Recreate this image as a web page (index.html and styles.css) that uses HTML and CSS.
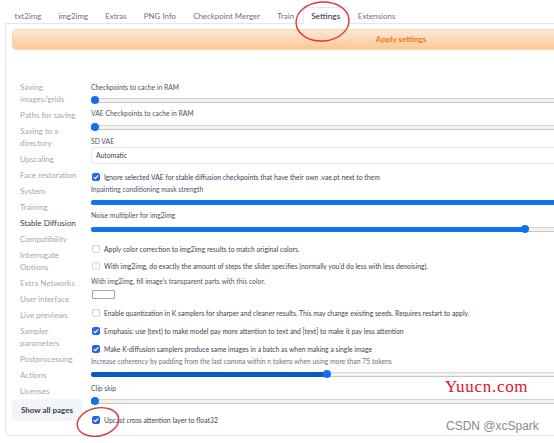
FILE: index.html
```html
<!DOCTYPE html>
<html>
<head>
<meta charset="utf-8">
<title>Settings</title>
<link rel="stylesheet" href="styles.css">
</head>
<body>
<div class="app">
  <div class="tabs">
    <div class="tab">txt2img</div>
    <div class="tab">img2img</div>
    <div class="tab">Extras</div>
    <div class="tab">PNG Info</div>
    <div class="tab">Checkpoint Merger</div>
    <div class="tab">Train</div>
    <div class="tab selected">Settings</div>
    <div class="tab">Extensions</div>
  </div>
  <div class="panel">
    <div class="apply">Apply settings</div>
    <div class="settings">
      <div class="sidebar">
        <div class="nav">Saving images/grids</div>
        <div class="nav">Paths for saving</div>
        <div class="nav">Saving to a directory</div>
        <div class="nav">Upscaling</div>
        <div class="nav">Face restoration</div>
        <div class="nav">System</div>
        <div class="nav">Training</div>
        <div class="nav active">Stable Diffusion</div>
        <div class="nav">Compatibility</div>
        <div class="nav">Interrogate Options</div>
        <div class="nav">Extra Networks</div>
        <div class="nav">User interface</div>
        <div class="nav">Live previews</div>
        <div class="nav">Sampler parameters</div>
        <div class="nav">Postprocessing</div>
        <div class="nav">Actions</div>
        <div class="nav">Licenses</div>
        <div class="show-all">Show all pages</div>
      </div>
      <div class="main">
        <div class="label first">Checkpoints to cache in RAM</div>
        <div class="slider" style="--v:0"><div class="track"><div class="fill"></div><div class="rest"></div></div><div class="thumb"></div></div>

        <div class="label">VAE Checkpoints to cache in RAM</div>
        <div class="slider mt5" style="--v:0"><div class="track"><div class="fill"></div><div class="rest"></div></div><div class="thumb"></div></div>

        <div class="label mt5">SD VAE</div>
        <div class="dropdown">Automatic</div>

        <div class="check"><span class="box on"><svg viewBox="0 0 8 8"><path d="M1.7 4.1 L3.3 5.6 L6.3 2.4"/></svg></span>Ignore selected VAE for stable diffusion checkpoints that have their own .vae.pt next to them</div>

        <div class="label mt2">Inpainting conditioning mask strength</div>
        <div class="slider" style="--v:1.02"><div class="track"><div class="fill"></div><div class="rest"></div></div></div>

        <div class="label">Noise multiplier for img2img</div>
        <div class="slider mt5" style="--v:0.628"><div class="track"><div class="fill"></div><div class="rest"></div></div><div class="thumb"></div></div>

        <div class="check mt11"><span class="box"></span>Apply color correction to img2img results to match original colors.</div>
        <div class="check mt7"><span class="box"></span>With img2img, do exactly the amount of steps the slider specifies (normally you'd do less with less denoising).</div>

        <div class="label mt5">With img2img, fill image's transparent parts with this color.</div>
        <div class="color"></div>

        <div class="check mt9"><span class="box"></span>Enable quantization in K samplers for sharper and cleaner results. This may change existing seeds. Requires restart to apply.</div>
        <div class="check"><span class="box on"><svg viewBox="0 0 8 8"><path d="M1.7 4.1 L3.3 5.6 L6.3 2.4"/></svg></span>Emphasis: use (text) to make model pay more attention to text and [text] to make it pay less attention</div>
        <div class="check"><span class="box on"><svg viewBox="0 0 8 8"><path d="M1.7 4.1 L3.3 5.6 L6.3 2.4"/></svg></span>Make K-diffusion samplers produce same images in a batch as when making a single image</div>

        <div class="label light mt2">Increase coherency by padding from the last comma within n tokens when using more than 75 tokens</div>
        <div class="slider dark" style="--v:0.339"><div class="track"><div class="fill"></div><div class="rest"></div></div><div class="thumb"></div></div>

        <div class="label mt5">Clip skip</div>
        <div class="slider" style="--v:0"><div class="track"><div class="fill"></div><div class="rest"></div></div><div class="thumb"></div></div>

        <div class="check mt10"><span class="box on"><svg viewBox="0 0 8 8"><path d="M1.7 4.1 L3.3 5.6 L6.3 2.4"/></svg></span>Upcast cross attention layer to float32</div>
      </div>
    </div>
  </div>
</div>

<svg class="annot" width="554" height="443" viewBox="0 0 554 443">
  <ellipse cx="322.5" cy="21.5" rx="26.5" ry="19.5" transform="rotate(-4 322.5 21.5)"/>
  <ellipse cx="98" cy="422" rx="21" ry="14" transform="rotate(-12 98 422)"/>
</svg>
<div class="wm-yuucn">Yuucn.com</div>
<div class="wm-csdn">CSDN @xcSpark</div>
</body>
</html>
```

FILE: styles.css
```css
* { box-sizing: border-box; }

html, body {
  margin: 0;
  padding: 0;
  background: #fff;
  overflow: hidden;
}

body {
  position: relative;
  width: 554px;
  height: 443px;
  font-family: Lato, "Noto Sans", sans-serif;
}

.app {
  width: 786px;
  margin-left: 5px;
  padding-top: 7px;
}

/* Tabs */
.tabs {
  display: flex;
  height: 17px;
  border-bottom: 1px solid #e5e7eb;
  padding-left: 1px;
}

.tab {
  padding: 2px 8.6px 0;
  font-size: 7.9px;
  line-height: 15px;
  color: #6b7280;
  white-space: nowrap;
}

.tab.selected {
  color: #1f2937;
  background: #fff;
  border: 1px solid #e5e7eb;
  border-bottom-color: #fff;
  border-radius: 4px 4px 0 0;
  height: 17px;
  padding: 1px 8px 0 7.5px;
  line-height: 15px;
  font-size: 8.3px;
}

/* Panel */
.panel {
  border: 1px solid #e5e7eb;
  border-top: none;
  border-radius: 0 0 6px 6px;
  padding: 5px 6px 10px;
}

.apply {
  height: 21px;
  border: 1px solid #fcd6b0;
  border-radius: 4px;
  background: linear-gradient(#fee8d2, #fbc895);
  color: #ee7b22;
  font-size: 8px;
  font-weight: 700;
  text-align: center;
  line-height: 19px;
  padding-left: 6px;
}

.settings {
  display: flex;
  gap: 9px;
  margin-top: 29px;
}

/* Sidebar */
.sidebar {
  width: 70px;
  flex: none;
}

.nav {
  padding: 2px 1px 2px 8px;
  font-size: 8px;
  line-height: 12px;
  color: #a3a8b1;
}

.nav.active {
  color: #374151;
}

.show-all {
  height: 22px;
  background: #f3f4f6;
  border-radius: 5px;
  font-size: 8px;
  font-weight: 700;
  color: #374151;
  text-align: center;
  line-height: 22px;
  white-space: nowrap;
}

/* Main */
.main {
  flex: 1;
  min-width: 0;
  padding-top: 3px;
  font-size: 6.8px;
}

.label {
  margin-top: 4px;
  line-height: 10px;
  color: #4b5563;
  white-space: nowrap;
}

.label.first { margin-top: 0; }
.label.light { color: #6b7280; }

.slider {
  position: relative;
  height: 8px;
  margin-top: 4px;
  display: flex;
  align-items: center;
}

.track {
  display: flex;
  width: 100%;
  height: 5px;
}

.fill {
  width: calc(var(--v) * (100% - 8px) + 4px);
  background: #1570ef;
  border-radius: 2px 0 0 2px;
}

.slider.dark .fill { background: #0c58c4; }

.rest {
  flex: 1;
  background: #f2f2f2;
  border-top: 1px solid #d5d5d5;
  border-bottom: 1px solid #c6c6c6;
}

.thumb {
  position: absolute;
  top: 0;
  left: calc(var(--v) * (100% - 8px));
  width: 8px;
  height: 8px;
  border-radius: 50%;
  background: #1570ef;
}

.dropdown {
  margin-top: 1px;
  height: 17px;
  border: 1px solid #e5e7eb;
  border-radius: 3px;
  padding-left: 4px;
  line-height: 15px;
  color: #374151;
}

.check {
  display: flex;
  align-items: center;
  gap: 4px;
  margin-top: 8px;
  padding-left: 1px;
  line-height: 10px;
  color: #3d4553;
  white-space: nowrap;
}

.box {
  width: 8px;
  height: 8px;
  flex: none;
  border: 1px solid #d1d5db;
  border-radius: 2px;
  background: #fff;
  display: flex;
}

.box.on {
  background: #2563eb;
  border-color: #2563eb;
}

.box svg {
  width: 8px;
  height: 8px;
  margin: -1px;
}

.box svg path {
  fill: none;
  stroke: #fff;
  stroke-width: 1.3;
}

.color {
  width: 23px;
  height: 9px;
  margin: 4px 0 0 1px;
  border: 1px solid #9ca3af;
  border-radius: 1px;
}

.mt2 { margin-top: 2px; }
.mt5 { margin-top: 5px; }
.mt7 { margin-top: 7px; }
.mt9 { margin-top: 9px; }
.mt10 { margin-top: 10px; }
.mt11 { margin-top: 11px; }

/* Overlays: annotation marks and watermarks */
.annot {
  position: absolute;
  left: 0;
  top: 0;
  pointer-events: none;
}

.annot ellipse {
  fill: none;
  stroke: #e3343a;
  stroke-width: 1.4;
}

.wm-yuucn {
  position: absolute;
  left: 445px;
  top: 377px;
  font-family: "Liberation Serif", serif;
  font-size: 17px;
  letter-spacing: 0.7px;
  color: #e8102c;
  line-height: 20px;
}

.wm-csdn {
  position: absolute;
  left: 446px;
  top: 419px;
  font-family: "Liberation Sans", Arial, sans-serif;
  font-size: 12px;
  line-height: 14px;
  color: #8c8c8c;
}
```
